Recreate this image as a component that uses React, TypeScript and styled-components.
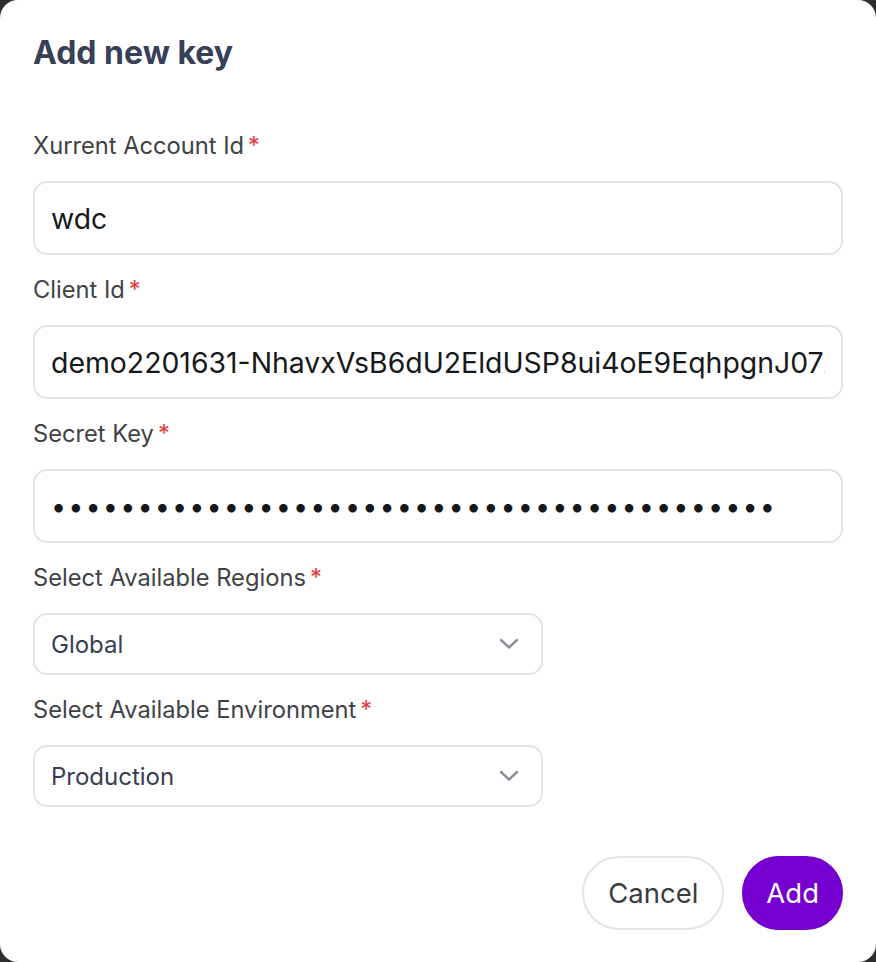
import React from 'react'
import styled, { createGlobalStyle } from 'styled-components'

const GlobalStyle = createGlobalStyle`
  html, body {
    margin: 0;
    padding: 0;
    background: #2e2e30;
  }
  body {
    font-family: Inter, 'Noto Sans', sans-serif;
  }
  * { box-sizing: border-box; }
`

// Modal sheet that fills the window
const Dialog = styled.div`
  width: 876px;
  height: 962px;
  background: #ffffff;
  border-radius: 18px;
  padding: 34px 33px 32px 33px;
  display: flex;
  flex-direction: column;
`

const Title = styled.h2`
  margin: 0 0 59px 0;
  font-size: 32px;
  line-height: 38px;
  font-weight: 700;
  color: #383f58;
`

const Form = styled.div`
  display: flex;
  flex-direction: column;
  gap: 20px;
`

const Field = styled.label`
  display: flex;
  flex-direction: column;
  gap: 20px;
`

const LabelText = styled.span`
  font-size: 23.7px;
  line-height: 30px;
  color: #3f4347;
`

const Required = styled.span`
  color: #e5393d;
  margin-left: 4px;
`

const TextInput = styled.input<{ $secret?: boolean }>`
  width: 100%;
  height: 74px;
  border: 2px solid #e3e3e8;
  border-radius: 14px;
  padding: 0 16px;
  font-family: Inter, 'Noto Sans', sans-serif;
  font-size: ${p => (p.$secret ? '27px' : '28.4px')};
  color: #15191c;
  background: #ffffff;
  outline: none;
  letter-spacing: ${p => (p.$secret ? '2.1px' : '0')};
`

const SelectBox = styled.div`
  width: 510px;
  height: 62px;
  border: 2px solid #e3e3e8;
  border-radius: 14px;
  padding: 0 22px 0 16px;
  display: flex;
  align-items: center;
  justify-content: space-between;
  font-size: 24px;
  color: #373d52;
`

const Footer = styled.div`
  margin-top: auto;
  display: flex;
  justify-content: flex-end;
  gap: 18px;
`

const Button = styled.button<{ $primary?: boolean }>`
  height: 74px;
  padding: 0 ${p => (p.$primary ? '22px' : '24px')};
  border-radius: 37px;
  font-family: Inter, 'Noto Sans', sans-serif;
  font-size: 27.5px;
  cursor: pointer;
  border: 2px solid ${p => (p.$primary ? '#7600cf' : '#e3e3e8')};
  background: ${p => (p.$primary ? '#7600cf' : '#ffffff')};
  color: ${p => (p.$primary ? '#ffffff' : '#3a3c3f')};
`

const Chevron = () => (
  <svg width="20" height="12" viewBox="0 0 20 12" fill="none">
    <path d="M2 2 L10 9.5 L18 2" stroke="#8d8d9c" strokeWidth="2.4" strokeLinecap="round" strokeLinejoin="round" />
  </svg>
)

export default function App() {
  return (
    <>
      <GlobalStyle />
      <Dialog>
        <Title>Add new key</Title>
        <Form>
          <Field>
            <LabelText>Xurrent Account Id<Required>*</Required></LabelText>
            <TextInput readOnly value="wdc" />
          </Field>
          <Field>
            <LabelText>Client Id<Required>*</Required></LabelText>
            <TextInput readOnly value="demo2201631-NhavxVsB6dU2EldUSP8ui4oE9EqhpgnJ07xk" />
          </Field>
          <Field>
            <LabelText>Secret Key<Required>*</Required></LabelText>
            <TextInput readOnly type="password" $secret value={'x'.repeat(42)} />
          </Field>
          <Field>
            <LabelText>Select Available Regions<Required>*</Required></LabelText>
            <SelectBox>
              Global
              <Chevron />
            </SelectBox>
          </Field>
          <Field>
            <LabelText>Select Available Environment<Required>*</Required></LabelText>
            <SelectBox>
              Production
              <Chevron />
            </SelectBox>
          </Field>
        </Form>
        <Footer>
          <Button>Cancel</Button>
          <Button $primary>Add</Button>
        </Footer>
      </Dialog>
    </>
  )
}
